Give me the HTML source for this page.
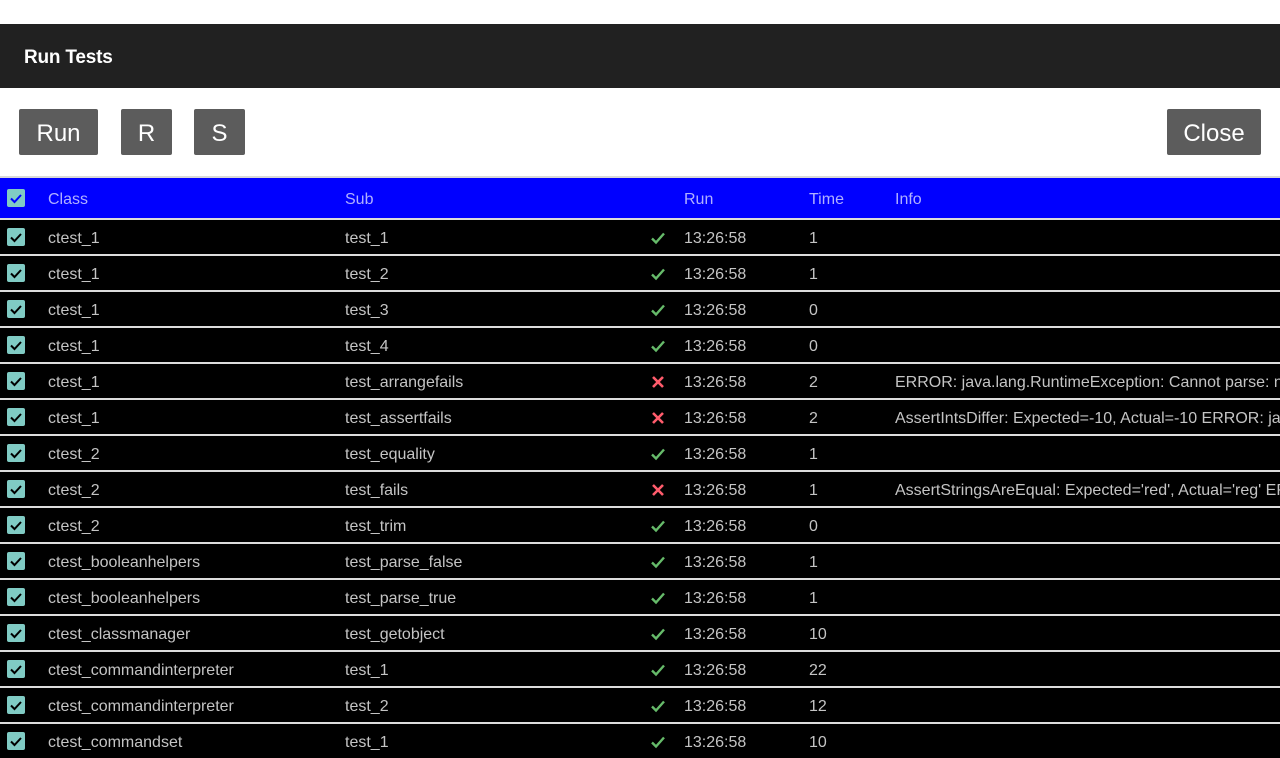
<!DOCTYPE html>
<html><head><style>
body{margin:0;width:1280px;height:752px;overflow:hidden;background:#fff;font-family:"Liberation Sans",sans-serif;position:relative}
.bar{position:absolute;top:24px;left:0;width:1280px;height:64px;background:#212121;color:#fff;font-weight:bold;font-size:19px;line-height:68px;text-indent:24px;letter-spacing:-0.2px}
.btn{position:absolute;top:109px;height:46px;background:#5c5c5c;color:#fff;font-size:24px;line-height:50px;text-align:center;border-radius:2px}
.line{position:absolute;top:176px;left:0;width:1280px;height:2px;background:#d8d8d8}
.row{position:absolute;left:0;width:1280px;height:34px;border-top:2px solid #dcdcdc;background:#000;color:#c4c4c4;font-size:16px;line-height:38px;white-space:nowrap;overflow:hidden}
.hdr{top:178px;height:40px;line-height:44px;border-top:none;background:#0000ff;color:#b0b0ff}
.row span{position:absolute}
.cb{position:absolute;left:7px;top:8px;width:18px;height:18px;background:#80cbc4;border-radius:2px}
.hdr .cb{top:11px}
.cb svg{position:absolute;left:0;top:0}
.ic{position:absolute;left:650px;top:10px}
.c1{left:48px}.c2{left:345px}.c4{left:684px}.c5{left:809px}.c6{left:895px}
</style></head><body>
<div class="bar">Run Tests</div>
<div class="btn" style="left:19px;width:79px">Run</div>
<div class="btn" style="left:121px;width:51px">R</div>
<div class="btn" style="left:194px;width:51px">S</div>
<div class="btn" style="left:1167px;width:94px">Close</div>
<div class="line"></div>
<div class="row hdr"><div class="cb"><svg width="18" height="18"><path d="M4 9.5l3.5 3.5 6.5-7" stroke="#0000ff" stroke-width="2" fill="none"/></svg></div><span class="c1">Class</span><span class="c2">Sub</span><span class="c4">Run</span><span class="c5">Time</span><span class="c6">Info</span></div>
<div id="rows"></div>
<script>
var d=[["ctest_1","test_1",1,"1",""],["ctest_1","test_2",1,"1",""],["ctest_1","test_3",1,"0",""],["ctest_1","test_4",1,"0",""],["ctest_1","test_arrangefails",0,"2","ERROR: java.lang.RuntimeException: Cannot parse: null"],["ctest_1","test_assertfails",0,"2","AssertIntsDiffer: Expected=-10, Actual=-10 ERROR: java.lang"],["ctest_2","test_equality",1,"1",""],["ctest_2","test_fails",0,"1","AssertStringsAreEqual: Expected='red', Actual='reg' ERROR"],["ctest_2","test_trim",1,"0",""],["ctest_booleanhelpers","test_parse_false",1,"1",""],["ctest_booleanhelpers","test_parse_true",1,"1",""],["ctest_classmanager","test_getobject",1,"10",""],["ctest_commandinterpreter","test_1",1,"22",""],["ctest_commandinterpreter","test_2",1,"12",""],["ctest_commandset","test_1",1,"10",""]];
var h="";
d.forEach(function(r,i){
var ic=r[2]?'<svg class="ic" width="16" height="16"><path d="M2 8.5l4 4 8-9" stroke="#66bb6a" stroke-width="2.4" fill="none"/></svg>':'<svg class="ic" width="16" height="16"><path d="M3 3l10 10M13 3L3 13" stroke="#ff5c6c" stroke-width="2.6" fill="none"/></svg>';
h+='<div class="row" style="top:'+(218+36*i)+'px"><div class="cb"><svg width="18" height="18"><path d="M4 9.5l3.5 3.5 6.5-7" stroke="#000" stroke-width="2" fill="none"/></svg></div><span class="c1">'+r[0]+'</span><span class="c2">'+r[1]+'</span>'+ic+'<span class="c4">13:26:58</span><span class="c5">'+r[3]+'</span><span class="c6">'+r[4]+'</span></div>';
});
document.getElementById("rows").innerHTML=h;
</script>
</body></html>
